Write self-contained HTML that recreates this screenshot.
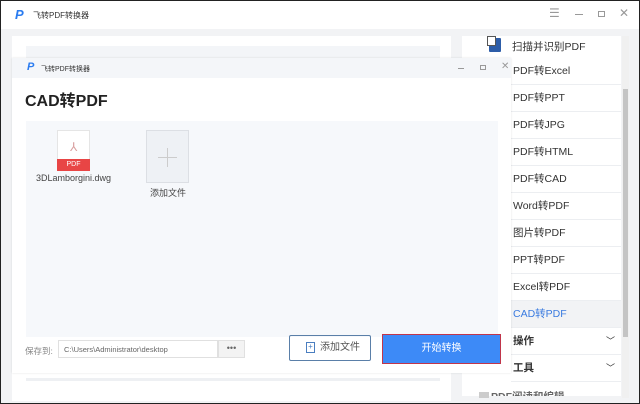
<!DOCTYPE html><html><head><meta charset="utf-8"><style>
*{margin:0;padding:0;box-sizing:border-box}
body{width:640px;height:404px;overflow:hidden;background:#222;font-family:"Liberation Sans","Noto Sans CJK SC",sans-serif;position:relative}
.win{position:absolute;left:1px;top:1px;width:638px;height:402px;background:#f2f3f5;overflow:hidden}
.tb{position:absolute;left:0;top:0;width:638px;height:28px;background:#fff}
.abs{position:absolute}
.t{font-size:9px;color:#333;white-space:nowrap}
.item{position:absolute;left:510px;width:110px;height:27px;border-bottom:1px solid #eceef1;font-size:10.5px;color:#333;padding-left:2px;line-height:26px;background:#fff}
</style></head><body><div class="win">
<div class="tb">
<div class="abs" style="left:14px;top:6px;font:bold italic 13px 'Liberation Sans';color:#2b7cf0">P</div>
<div class="abs t" style="left:32px;top:9px;font-size:8px">飞转PDF转换器</div>
<div class="abs t" style="left:548px;top:5px;font-size:12px;color:#999">☰</div>
<div class="abs" style="left:574px;top:13px;width:8px;height:1px;background:#999"></div>
<div class="abs" style="left:597px;top:10px;width:7px;height:6px;border:1px solid #999"></div>
<div class="abs t" style="left:618px;top:5px;font-size:12px;color:#999">✕</div>
</div>
<div class="abs" style="left:11px;top:35px;width:439px;height:365px;background:#fff"></div>
<div class="abs" style="left:25px;top:45px;width:414px;height:14px;background:#f3f5f8"></div>
<div class="abs" style="left:461px;top:35px;width:159px;height:360px;background:#fff"></div>
<div class="abs" style="left:488px;top:37px;width:12px;height:14px;background:#2d5da8;border-radius:1px"></div>
<div class="abs" style="left:486px;top:35px;width:9px;height:10px;background:#fff;border:1px solid #555"></div>
<div class="abs t" style="left:511px;top:38px;font-size:10.5px">扫描并识别PDF</div>
<div class="item" style="top:57px">PDF转Excel</div>
<div class="item" style="top:84px">PDF转PPT</div>
<div class="item" style="top:111px">PDF转JPG</div>
<div class="item" style="top:138px">PDF转HTML</div>
<div class="item" style="top:165px">PDF转CAD</div>
<div class="item" style="top:192px">Word转PDF</div>
<div class="item" style="top:219px">图片转PDF</div>
<div class="item" style="top:246px">PPT转PDF</div>
<div class="item" style="top:273px">Excel转PDF</div>
<div class="item" style="top:300px;background:#f2f3f5;color:#3a7be0">CAD转PDF</div>
<div class="item" style="top:327px;font-weight:bold">操作<span style="position:absolute;right:6px;font-weight:normal;font-size:9px">﹀</span></div>
<div class="item" style="top:354px;font-weight:bold">工具<span style="position:absolute;right:6px;font-weight:normal;font-size:9px">﹀</span></div>
<div class="abs" style="left:478px;top:391px;width:10px;height:6px;background:#ccc"></div>
<div class="abs" style="left:461px;top:388px;width:159px;height:7px;overflow:hidden"><div class="abs t" style="left:29px;top:0px;font-size:10.5px;font-weight:bold;color:#666">PDF阅读和编辑</div></div>
<div class="abs" style="left:621px;top:35px;width:7px;height:362px;background:#f0f0f0"></div>
<div class="abs" style="left:622px;top:88px;width:5px;height:248px;background:#c4c4c4"></div>
<!-- dialog -->
<div class="abs" style="left:11px;top:57px;width:499px;height:315px;background:#fff;box-shadow:0 0 2px rgba(0,0,0,.12)">
<div class="abs" style="left:0;top:0;width:499px;height:20px;background:#f4f6f9"></div>
<div class="abs" style="left:15px;top:3px;font:bold italic 11px 'Liberation Sans';color:#2b7cf0">P</div>
<div class="abs t" style="left:29px;top:6px;font-size:7px">飞转PDF转换器</div>
<div class="abs" style="left:446px;top:10px;width:6px;height:1px;background:#999"></div>
<div class="abs" style="left:468px;top:7px;width:6px;height:5px;border:1px solid #999"></div>
<div class="abs t" style="left:489px;top:3px;font-size:10px;color:#999">✕</div>
<div class="abs" style="left:13px;top:29px;font-size:16px;font-weight:bold;color:#222">CAD转PDF</div>
<div class="abs" style="left:14px;top:63px;width:472px;height:216px;background:#f6f8fb"></div>
<div class="abs" style="left:45px;top:72px;width:33px;height:41px;background:#fff;border:1px solid #e5e5e5"></div>
<div class="abs t" style="left:58px;top:82px;color:#d9a0a0;font-size:12px">⅄</div>
<div class="abs" style="left:45px;top:101px;width:33px;height:12px;background:#e84545;color:#fff;font-size:7px;text-align:center;line-height:12px">PDF</div>
<div class="abs t" style="left:24px;top:115px;font-size:9px;color:#444">3DLamborgini.dwg</div>
<div class="abs" style="left:134px;top:72px;width:43px;height:53px;background:#eef1f5;border:1px solid #dcdfe4"></div>
<div class="abs" style="left:146px;top:99px;width:19px;height:1px;background:#ccc"></div>
<div class="abs" style="left:155px;top:90px;width:1px;height:19px;background:#ccc"></div>
<div class="abs t" style="left:138px;top:128px;font-size:9px;color:#444">添加文件</div>
<div class="abs t" style="left:13px;top:287px;font-size:8.5px;color:#888">保存到:</div>
<div class="abs" style="left:46px;top:282px;width:160px;height:18px;border:1px solid #e0e0e0;font-size:7.5px;color:#666;padding:4px 5px;white-space:nowrap">C:\Users\Administrator\desktop</div>
<div class="abs" style="left:206px;top:282px;width:27px;height:18px;background:#f3f3f3;border:1px solid #e0e0e0;font-size:9px;color:#666;text-align:center;line-height:14px">•••</div>
<div class="abs" style="left:277px;top:277px;width:82px;height:26px;border:1px solid #5a7fa8;border-radius:2px;font-size:10px;color:#555;line-height:24px;padding-left:30px">添加文件</div>
<div class="abs" style="left:294px;top:284px;width:9px;height:11px;border:1px solid #4a7ec0;font-size:8px;line-height:8px;text-align:center;color:#4a7ec0">+</div>
<div class="abs" style="left:370px;top:276px;width:119px;height:30px;background:#3d8af7;border:1.5px solid #c0354a;color:#fff;font-size:10px;text-align:center;line-height:27px">开始转换</div>
</div>
<div class="abs" style="left:25px;top:377px;width:414px;height:3px;background:#eef0f3"></div>
</div></body></html>
